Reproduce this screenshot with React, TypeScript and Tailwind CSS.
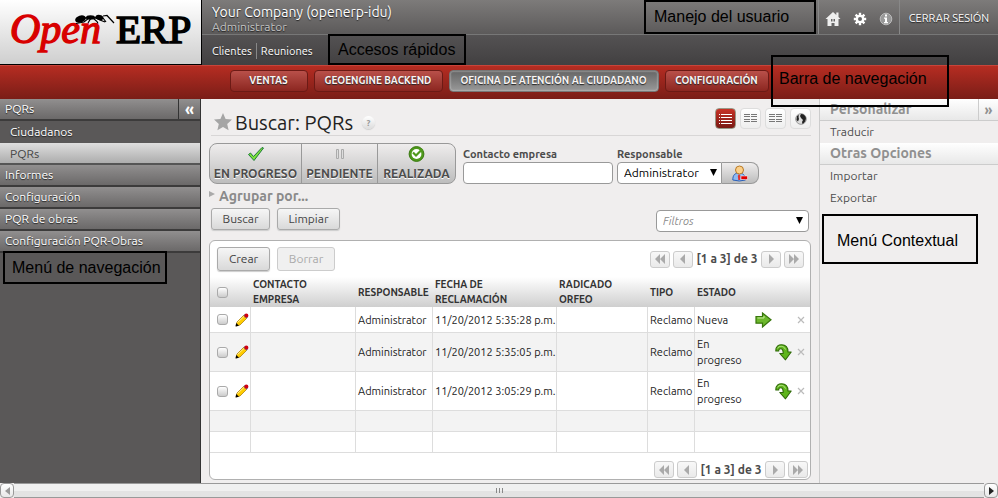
import React from "react";

const shadowDark = "[text-shadow:0_1px_1px_#222]";

function Note({ className, children }: { className: string; children: React.ReactNode }) {
  return (
    <div
      className={`absolute z-10 flex items-center border-2 border-black font-['Liberation_Sans',Arial,sans-serif] text-base leading-5 whitespace-nowrap text-black ${className}`}
    >
      {children}
    </div>
  );
}

function Logo() {
  return (
    <a
      href="#"
      aria-label="Open ERP"
      className="block h-[65px] w-[202px] shrink-0 border-r border-b border-black bg-linear-to-b from-white to-[#cfcfcf]"
    >
      <svg width="201" height="64" viewBox="0 0 201 64">
        <text x="10" y="43" fontSize="42" fontStyle="italic" fill="#d80000" stroke="#d80000" strokeWidth="1.4" fontFamily="'Liberation Serif', serif">
          Open
        </text>
        <text x="116" y="43" fontSize="41" fill="#000" stroke="#000" strokeWidth="1.7" fontFamily="'Liberation Serif', serif">
          ERP
        </text>
        <ellipse cx="80.500" cy="19" rx="5.500" ry="3.500" transform="rotate(-18 80.500 19)" />
        <ellipse cx="90.500" cy="17.500" rx="4.500" ry="2.200" />
        <ellipse cx="99.500" cy="17.500" rx="4" ry="2.600" transform="rotate(15 99.500 17.500)" />
        <path d="M85 18h13" stroke="#000" strokeWidth="1.5" />
        <g fill="none" stroke="#000" strokeWidth="1.2">
          <path d="M89 18l-5 4-8 1.500M91 18l-3 5M93 18l4 3.500 1 2M95 17l5 3 5 2M103 18l3 4M103 16l4-.5 7 7.500" />
        </g>
      </svg>
    </a>
  );
}

function HomeIcon() {
  return (
    <svg width="16" height="16" viewBox="0 0 16 16" fill="#eee">
      <path d="M8 1L0.500 8h2v7h11V8h2L13.500 6V1.500h-2.200v2.400z" />
      <path d="M6 8h1.500v2.500H6zM8.500 8H10v2.500H8.500zM6.500 12h3v3h-3z" fill="#666" />
    </svg>
  );
}

function GearIcon() {
  return (
    <svg width="14" height="14" viewBox="0 0 14 14">
      <g stroke="#fff" strokeWidth="2.400">
        <path d="M7 .8v12.400M.8 7h12.400M2.600 2.600l8.800 8.800M11.400 2.600l-8.800 8.800" />
      </g>
      <circle cx="7" cy="7" r="4.300" fill="#fff" />
      <circle cx="7" cy="7" r="2" fill="#666" />
    </svg>
  );
}

function InfoIcon() {
  return (
    <svg width="14" height="14" viewBox="0 0 14 14">
      <circle cx="7" cy="7" r="5.800" fill="#999" stroke="#bbb" />
      <path d="M6 2.500h2v2H6zM5 5.500h3v4.500h1v1.200H5V10h1V6.700H5z" fill="#fff" />
    </svg>
  );
}

function Header() {
  return (
    <header className="flex text-white">
      <Logo />
      <div className={`relative min-w-0 flex-1 ${shadowDark}`}>
        <div className="flex h-[35px] border-b border-[#777] bg-linear-to-b from-[#7d7b7a] to-[#5c5a5a]">
          <div className="flex-1 pt-1 pl-[10px]">
            <p className="text-sm leading-4">Your Company (openerp-idu)</p>
            <p className="text-xs leading-[13px] text-[#c4c4c4]">Administrator</p>
          </div>
          <nav className="flex items-center gap-3 border-l border-[#888] px-[6px] pt-1" aria-label="Usuario">
            <a href="#" aria-label="Inicio"><HomeIcon /></a>
            <a href="#" aria-label="Preferencias"><GearIcon /></a>
            <a href="#" aria-label="Acerca de"><InfoIcon /></a>
          </nav>
          <div className="flex w-[99px] items-center justify-center border-l border-[#888] pt-[2px] text-[11px]">
            <a href="#">CERRAR SESIÓN</a>
          </div>
        </div>
        <div className="flex h-[30px] items-center bg-linear-to-b from-[#545253] to-[#424041] pt-[2px] pl-[10px] text-[11px] leading-4">
          <a href="#" className="border-r border-[#888] pr-1">Clientes</a>
          <a href="#" className="pl-1">Reuniones</a>
        </div>
        <Note className="top-[34px] left-[126px] h-[31px] w-[138px] pl-2 [text-shadow:none]">Accesos rápidos</Note>
        <Note className="top-0 right-[182px] h-[34px] w-[172px] pl-2 [text-shadow:none]">Manejo del usuario</Note>
      </div>
    </header>
  );
}

const areas = [
  { name: "VENTAS", width: "w-[78px]" },
  { name: "GEOENGINE BACKEND", width: "w-[129px]" },
  { name: "OFICINA DE ATENCIÓN AL CIUDADANO", width: "w-[210px]", active: true },
  { name: "CONFIGURACIÓN", width: "w-[104px]" },
];

function AreaNav() {
  return (
    <nav className="relative flex h-[34px] items-start justify-center gap-[6px] border-t border-[#c8443a] bg-linear-to-b from-[#b62d22] to-[#7a1d17] pt-1">
      {areas.map((a) => (
        <button
          key={a.name}
          type="button"
          className={`h-[22px] shrink-0 rounded border text-[10px] leading-4 font-bold whitespace-nowrap text-[#f8f4f4] ${shadowDark} ${a.width} ${
            a.active
              ? "border-[#777] bg-linear-to-b from-[#666] to-[#999] shadow-[inset_0_0_2px_#ddd]"
              : "border-[#6c1a15] bg-linear-to-b from-[#b9504a] to-[#8c2620]"
          }`}
        >
          {a.name}
        </button>
      ))}
      <Note className="top-[-11px] right-[49px] h-[52px] w-[178px] items-start pt-3 pl-[6px]">Barra de navegación</Note>
    </nav>
  );
}

const sideHead = "h-[22px] border-b-2 border-[#3c3b3b] bg-linear-to-b from-[#918f8f] to-[#6b6969] leading-5";

function Sidebar() {
  return (
    <nav className={`relative w-[201px] shrink-0 border-r border-[#333] bg-[#5a5858] text-xs text-white ${shadowDark}`}>
      <div className={`flex justify-between ${sideHead}`}>
        <a href="#" className="pl-[5px]">PQRs</a>
        <button type="button" aria-label="Ocultar menú" className="w-[22px] border-l border-[#333] text-base leading-4 font-semibold">«</button>
      </div>
      <a href="#" className="block h-[22px] pl-[10px] leading-[22px]">Ciudadanos</a>
      <a href="#" className="block h-[22px] border-b-2 border-[#555] bg-linear-to-b from-[#dedede] to-[#adadad] pl-[10px] leading-[21px] text-[#444] [text-shadow:none]">PQRs</a>
      {["Informes", "Configuración", "PQR de obras", "Configuración PQR-Obras"].map((t) => (
        <a key={t} href="#" className={`block pl-[5px] ${sideHead}`}>{t}</a>
      ))}
      <Note className="top-[152px] left-[3px] h-[33px] w-[164px] pl-[7px] [text-shadow:none]">Menú de navegación</Note>
    </nav>
  );
}

function ViewButtons() {
  const base = "flex size-[21px] items-center justify-center rounded-sm border";
  return (
    <div className="flex gap-1">
      <button type="button" aria-label="Lista" className={`${base} border-[#998] bg-linear-to-b from-[#c83226] to-[#7a1913]`}>
        <svg width="13" height="10" viewBox="0 0 13 10" fill="#fff">
          <path d="M0 0h1v1H0zM2 0h11v1H2zM0 3h1v1H0zM2 3h11v1H2zM0 6h1v1H0zM2 6h11v1H2zM0 9h1v1H0zM2 9h11v1H2z" />
        </svg>
      </button>
      {["Formulario", "Kanban"].map((l) => (
        <button key={l} type="button" aria-label={l} className={`${base} border-[#ddd] bg-linear-to-b from-white to-[#eee]`}>
          <svg width="13" height="9" viewBox="0 0 13 9" fill="#777">
            <path d="M0 0h6v1H0zM7 0h6v1H7zM0 2h6v1H0zM7 2h6v1H7zM0 5h6v1H0zM7 5h6v1H7zM0 7h6v1H0zM7 7h6v1H7z" />
          </svg>
        </button>
      ))}
      <button type="button" aria-label="Mapa" className={`${base} border-[#ddd] bg-linear-to-b from-white to-[#eee]`}>
        <svg width="12" height="12" viewBox="0 0 12 12">
          <circle cx="6" cy="6" r="5.300" fill="#ddd" stroke="#999" />
          <path d="M6 1c3 0 4.500 2 5 4-.2 3-1.500 5-3.500 6L7 9l1-2-2-2-1-2zM2 3l2-1-.5 2L4 6 3 8.500 1.500 7z" fill="#222" />
        </svg>
      </button>
    </div>
  );
}

function CheckIcon() {
  return (
    <svg width="18" height="16" viewBox="0 0 18 16" className="shrink-0">
      <path d="M1.500 8.500l2-1.500 3 3.500L15 1.500l1.500.5L7 14.500z" fill="#7be03a" stroke="#1f7a3a" strokeLinejoin="round" />
    </svg>
  );
}

function PauseIcon() {
  return (
    <svg width="16" height="16" viewBox="0 0 16 16" fill="#ddd" stroke="#aaa" className="shrink-0">
      <path d="M4.500 3.500h2v9h-2zM9.500 3.500h2v9h-2z" />
    </svg>
  );
}

function DoneIcon() {
  return (
    <svg width="17" height="16" viewBox="0 0 17 16" className="shrink-0">
      <circle cx="8.500" cy="8" r="7.400" fill="#4f9a1c" stroke="#38780f" />
      <circle cx="8.500" cy="8" r="4.900" fill="#fff" />
      <path d="M5 6.500L8 9.500L14.500 3" fill="none" stroke="#4f9a1c" strokeWidth="2.200" />
    </svg>
  );
}

const states = [
  { name: "EN PROGRESO", icon: <CheckIcon />, width: "w-[92px]" },
  { name: "PENDIENTE", icon: <PauseIcon />, width: "w-[76px]" },
  { name: "REALIZADA", icon: <DoneIcon />, width: "w-[77px]" },
];

function DownArrow({ className }: { className: string }) {
  return (
    <svg width="7" height="7" viewBox="0 0 7 7" className={`pointer-events-none absolute ${className}`}>
      <path d="M0 0h7L3.500 7z" />
    </svg>
  );
}

function UserIcon() {
  return (
    <svg width="16" height="17" viewBox="0 0 16 17">
      <path d="M.8 15c0-5 2-7 6.200-7s6 2 6.500 7q-6 2-12.700 0z" fill="#8fbaf2" stroke="#2c5fb5" />
      <path d="M7 9l1.500 2L8 15H6.300L5.800 11z" fill="#d33" />
      <circle cx="7.500" cy="5" r="4" fill="#fbd08a" stroke="#b97a26" />
      <path d="M9 11h6.500v3.500H9z" fill="#e00000" stroke="#fff" strokeWidth=".5" />
    </svg>
  );
}

const fieldBox = "block h-[22px] w-full appearance-none border border-[#999] bg-white";
const fieldLabel = "text-[11px] leading-[15px] font-bold text-[#4c4c4c]";
const greyButton =
  "rounded-[3px] border border-[#aaa] bg-linear-to-b from-[#f6f6f6] to-[#d9d9d9] text-xs text-[#444] shadow-[0_1px_1px_#ccc]";

function SearchForm() {
  return (
    <form onSubmit={(e) => e.preventDefault()}>
      <div className="flex h-[41px] items-stretch">
        <div className="flex shrink-0 overflow-hidden rounded-lg border border-[#999] bg-linear-to-b from-[#efeded] to-[#bdbdbd]">
          {states.map((s) => (
            <button
              key={s.name}
              type="button"
              className={`flex flex-col items-center gap-[3px] border-r border-[#999] pt-[2px] text-xs leading-[18px] font-bold whitespace-nowrap text-[#4c4c4c] [text-shadow:0_1px_0_#fff] last:border-r-0 ${s.width}`}
            >
              {s.icon}
              {s.name}
            </button>
          ))}
        </div>
        <div className="ml-[7px] flex w-[150px] flex-col justify-end">
          <label htmlFor="contact" className={fieldLabel}>Contacto empresa</label>
          <input id="contact" type="text" className={`${fieldBox} rounded`} />
        </div>
        <div className="ml-1 flex w-[142px] flex-col justify-end">
          <label htmlFor="user" className={fieldLabel}>Responsable</label>
          <div className="flex">
            <div className="relative w-[105px]">
              <select id="user" className={`${fieldBox} rounded-l pl-[6px] text-xs leading-5 text-black`}>
                <option>Administrator</option>
              </select>
              <DownArrow className="top-[7px] right-[5px]" />
            </div>
            <button
              type="button"
              aria-label="Mis registros"
              className="flex h-[22px] flex-1 items-center justify-center rounded-r-lg border border-l-0 border-[#999] bg-linear-to-b from-[#efeded] to-[#bdbdbd]"
            >
              <UserIcon />
            </button>
          </div>
        </div>
      </div>
      <button type="button" className="flex h-6 items-center gap-1 text-sm leading-6 font-bold text-[#8a8a8a]">
        <svg width="6" height="6" viewBox="0 0 6 6" className="mb-1"><path d="M0 0l6 3-6 3z" fill="#aaa" /></svg>
        Agrupar por...
      </button>
      <div className="flex gap-[7px] px-[2px]">
        <button type="submit" className={`h-[22px] w-[59px] ${greyButton}`}>Buscar</button>
        <button type="reset" className={`h-[22px] w-[63px] ${greyButton}`}>Limpiar</button>
        <div className="relative mt-[2px] ml-auto w-[153px]">
          <select aria-label="Filtros" className={`${fieldBox} rounded pl-[6px] text-[11px] leading-5 text-[#8a8a8a] italic`}>
            <option>Filtros</option>
          </select>
          <DownArrow className="top-[7px] right-[6px]" />
        </div>
      </div>
    </form>
  );
}

const arrows: Record<string, string> = {
  Primera: "M7 0v10L2 5zM12 0v10L7 5z",
  Anterior: "M9 0v10L4 5z",
  Siguiente: "M5 0v10l5-5z",
  "Última": "M2 0v10l5-5zM7 0v10l5-5z",
};

function PagerButton({ name }: { name: string }) {
  return (
    <button
      type="button"
      aria-label={name}
      className="flex h-[17px] w-5 items-center justify-center rounded-[3px] border border-[#ccc] bg-linear-to-b from-[#f8f8f8] to-[#eaeaea]"
    >
      <svg width="14" height="10" viewBox="0 0 14 10"><path d={arrows[name]} fill="#aaa" /></svg>
    </button>
  );
}

function Pager() {
  return (
    <div className="flex items-center gap-[3px]">
      <PagerButton name="Primera" />
      <PagerButton name="Anterior" />
      <span className="flex w-[62px] justify-center text-xs leading-4 font-bold whitespace-nowrap text-[#4c4c4c]">[1 a 3] de 3</span>
      <PagerButton name="Siguiente" />
      <PagerButton name="Última" />
    </div>
  );
}

function Check({ label }: { label: string }) {
  return (
    <input
      type="checkbox"
      aria-label={label}
      className="ml-[7px] block size-[11px] appearance-none rounded-[3px] border border-[#aaa] bg-linear-to-b from-white to-[#ccc]"
    />
  );
}

function Pencil() {
  return (
    <svg width="14" height="14" viewBox="0 0 14 14">
      <path d="M1 13l1-4 7-7 3 3-7 7z" fill="#fc0" stroke="#a67500" strokeWidth=".7" />
      <path d="M2.500 9.500L9.500 3" stroke="#fff199" />
      <path d="M8.500 2.500L10 1l3 3-1.500 1.500z" fill="#3aa0e0" />
      <circle cx="11.300" cy="2.700" r="2.100" fill="#d00010" />
      <path d="M.5 13.500l.8-3.500 2.700 2.700z" />
    </svg>
  );
}

function Forward() {
  return (
    <svg width="18" height="16" viewBox="0 0 18 16" className="block">
      <path d="M1 4.500h6.500V1L16 7.800 7.500 15v-3.800H1z" fill="#6cb82c" stroke="#38760c" strokeWidth="1.200" />
      <path d="M2.500 6h6.500V4" stroke="#c4e89a" fill="none" />
    </svg>
  );
}

function Curved() {
  return (
    <svg width="17" height="17" viewBox="0 0 17 17" className="block">
      <path d="M.8 7C.8 2 4 .8 6.500.8c4.500 0 6.500 2.500 6.500 7.200h3.200L10.500 15.800 4.800 9.500h3.400c0-3.500-.8-4.800-2.500-4.800C4 4.700 3.500 6 3.800 7z" fill="#5fb51c" stroke="#2f6a08" strokeWidth="1.100" strokeLinejoin="round" />
      <path d="M2.200 4.500C4 1.500 9 1.500 10.500 5.500" fill="none" stroke="#b9e68a" />
    </svg>
  );
}

const rows = [
  { date: "11/20/2012 5:35:28 p.m.", state: "Nueva", height: "h-[26px]" },
  { date: "11/20/2012 5:35:05 p.m.", state: "En progreso", height: "h-[39px]" },
  { date: "11/20/2012 3:05:29 p.m.", state: "En progreso", height: "h-[39px]" },
];

const cell = "border-b border-l border-[#ddd] pl-[2px]";
const plain = "border-b border-[#ddd]";

function Records() {
  return (
    <table className="w-full table-fixed border-separate border-spacing-0 text-left text-[11px] leading-4 text-[#222]">
      <colgroup>
        <col className="w-[25px]" />
        <col className="w-[15px]" />
        <col />
        <col className="w-[77px]" />
        <col className="w-[124px]" />
        <col className="w-[91px]" />
        <col className="w-[47px]" />
        <col className="w-[61px]" />
        <col className="w-[20px]" />
        <col className="w-[21px]" />
        <col className="w-[14px]" />
      </colgroup>
      <thead>
        <tr className="h-[30px] bg-linear-to-b from-white to-[#cfcfcf] text-[10px] leading-[15px] text-[#333]">
          <th><Check label="Seleccionar todo" /></th>
          <th />
          <th className="pr-8 pl-[3px]">CONTACTO EMPRESA</th>
          <th className="pl-[3px]">RESPONSABLE</th>
          <th className="pr-6 pl-[3px]">FECHA DE RECLAMACIÓN</th>
          <th className="pr-6 pl-[3px]">RADICADO ORFEO</th>
          <th className="pl-[3px]">TIPO</th>
          <th className="pl-[3px]">ESTADO</th>
          <th colSpan={3} />
        </tr>
      </thead>
      <tbody>
        {rows.map((r) => (
          <tr key={r.date} className={`even:bg-[#f3f3f3] ${r.height}`}>
            <td className={plain}><Check label={`Seleccionar ${r.date}`} /></td>
            <td className={plain}><button type="button" aria-label="Editar" className="block"><Pencil /></button></td>
            <td className={cell} />
            <td className={`${cell} whitespace-nowrap`}>Administrator</td>
            <td className={`${cell} whitespace-nowrap`}>{r.date}</td>
            <td className={cell} />
            <td className={`${cell} whitespace-nowrap`}>Reclamo</td>
            <td className={cell}>{r.state}</td>
            <td className={plain}>
              {r.state === "Nueva" && <button type="button" aria-label="Avanzar" className="block"><Forward /></button>}
            </td>
            <td className={plain}>
              {r.state !== "Nueva" && <button type="button" aria-label="Realizar" className="block"><Curved /></button>}
            </td>
            <td className={plain}>
              <button type="button" aria-label="Eliminar" className="block">
                <svg width="10" height="10" viewBox="0 0 10 10" stroke="#bbb" strokeWidth="1.200"><path d="M2 2l6 6M8 2l-6 6" /></svg>
              </button>
            </td>
          </tr>
        ))}
        {[0, 1].map((n) => (
          <tr key={n} className="h-[21px] odd:bg-white even:bg-[#f3f3f3]">
            <td className={plain} colSpan={2} />
            <td className={cell} />
            <td className={cell} />
            <td className={cell} />
            <td className={cell} />
            <td className={cell} />
            <td className={cell} colSpan={4} />
          </tr>
        ))}
      </tbody>
    </table>
  );
}

function Main() {
  return (
    <main className="min-w-0 flex-1 px-2 pb-[3px]">
      <div className="ml-[2px] flex h-[37px] items-end border-b border-[#d8d6d6]">
        <svg width="20" height="18" viewBox="0 0 20 18" className="mb-1 ml-[2px]">
          <path d="M10 0l2.600 5.900 6.400.7-4.800 4.300 1.400 6.300L10 14l-5.600 3.200 1.400-6.300L1 6.600l6.400-.7z" fill="#a5a5a5" />
        </svg>
        <h1 className="ml-[2px] text-xl leading-6 text-[#222]">Buscar: PQRs</h1>
        <button type="button" aria-label="Ayuda" className="mb-[6px] ml-[9px] size-[13px] rounded-full bg-linear-to-b from-white to-[#ddd] text-[9px] leading-3 font-bold text-[#999] shadow-[0_1px_1px_#ccc]">?</button>
        <div className="mb-[6px] ml-auto"><ViewButtons /></div>
      </div>
      <div className="pt-[7px]"><SearchForm /></div>
      <section className="mt-2 rounded-md border border-[#b0b0b0] bg-white">
        <div className="flex h-9 items-center justify-between pr-[6px] pl-[7px]">
          <div className="flex gap-[7px]">
            <button type="button" className={`h-6 w-[53px] ${greyButton}`}>Crear</button>
            <button type="button" disabled className="h-6 w-[58px] rounded-[3px] border border-[#ccc] bg-[#f0f0f0] text-xs text-[#aaa]">Borrar</button>
          </div>
          <Pager />
        </div>
        <Records />
        <div className="flex h-[26px] items-center justify-end pt-[7px] pr-[2px]"><Pager /></div>
      </section>
    </main>
  );
}

const sectionHead = "h-[22px] border-b border-[#ccc] bg-linear-to-b from-white to-[#e8e8e8] text-sm leading-[21px] font-bold text-[#909090]";

function ContextMenu() {
  return (
    <aside className="relative w-[179px] shrink-0 border-l border-[#ccc] text-xs leading-[22px] text-[#4c4c4c]">
      <div className={`flex justify-between ${sectionHead}`}>
        <h2 className="pl-[10px]">Personalizar</h2>
        <button type="button" aria-label="Ocultar panel" className="w-5 border-l border-[#ccc] text-sm leading-4">»</button>
      </div>
      <a href="#" className="block pl-[10px]">Traducir</a>
      <h2 className={`pl-[10px] ${sectionHead}`}>Otras Opciones</h2>
      <a href="#" className="block pl-[10px]">Importar</a>
      <a href="#" className="block pl-[10px]">Exportar</a>
      <Note className="top-[115px] left-[2px] h-[50px] w-[156px] pt-1 pl-[13px]">Menú Contextual</Note>
    </aside>
  );
}

function ScrollStrip() {
  const end = "flex w-[14px] items-center justify-center rounded-sm border border-[#999] bg-linear-to-b from-white to-[#e8e8e8]";
  return (
    <div className="flex h-[15px] shrink-0">
      <button type="button" aria-label="Desplazar a la izquierda" className={end}>
        <svg width="5" height="8" viewBox="0 0 5 8"><path d="M5 0v8L0 4z" fill="#999" /></svg>
      </button>
      <div className="flex flex-1 items-center justify-center gap-[2px] border-y border-[#999] bg-linear-to-b from-[#f0f0f0] from-50% to-[#e3e3e3] to-50%">
        <span className="h-[5px] w-px bg-[#888]" />
        <span className="h-[5px] w-px bg-[#888]" />
        <span className="h-[5px] w-px bg-[#888]" />
      </div>
      <button type="button" aria-label="Desplazar a la derecha" className={end}>
        <svg width="5" height="8" viewBox="0 0 5 8"><path d="M0 0v8l5-4z" fill="#222" /></svg>
      </button>
    </div>
  );
}

export default function App() {
  return (
    <div className="flex min-h-screen flex-col bg-[#f0eeee] font-[Ubuntu,'Open_Sans','Noto_Sans',sans-serif]">
      <Header />
      <AreaNav />
      <div className="flex flex-1">
        <Sidebar />
        <Main />
        <ContextMenu />
      </div>
      <ScrollStrip />
    </div>
  );
}
